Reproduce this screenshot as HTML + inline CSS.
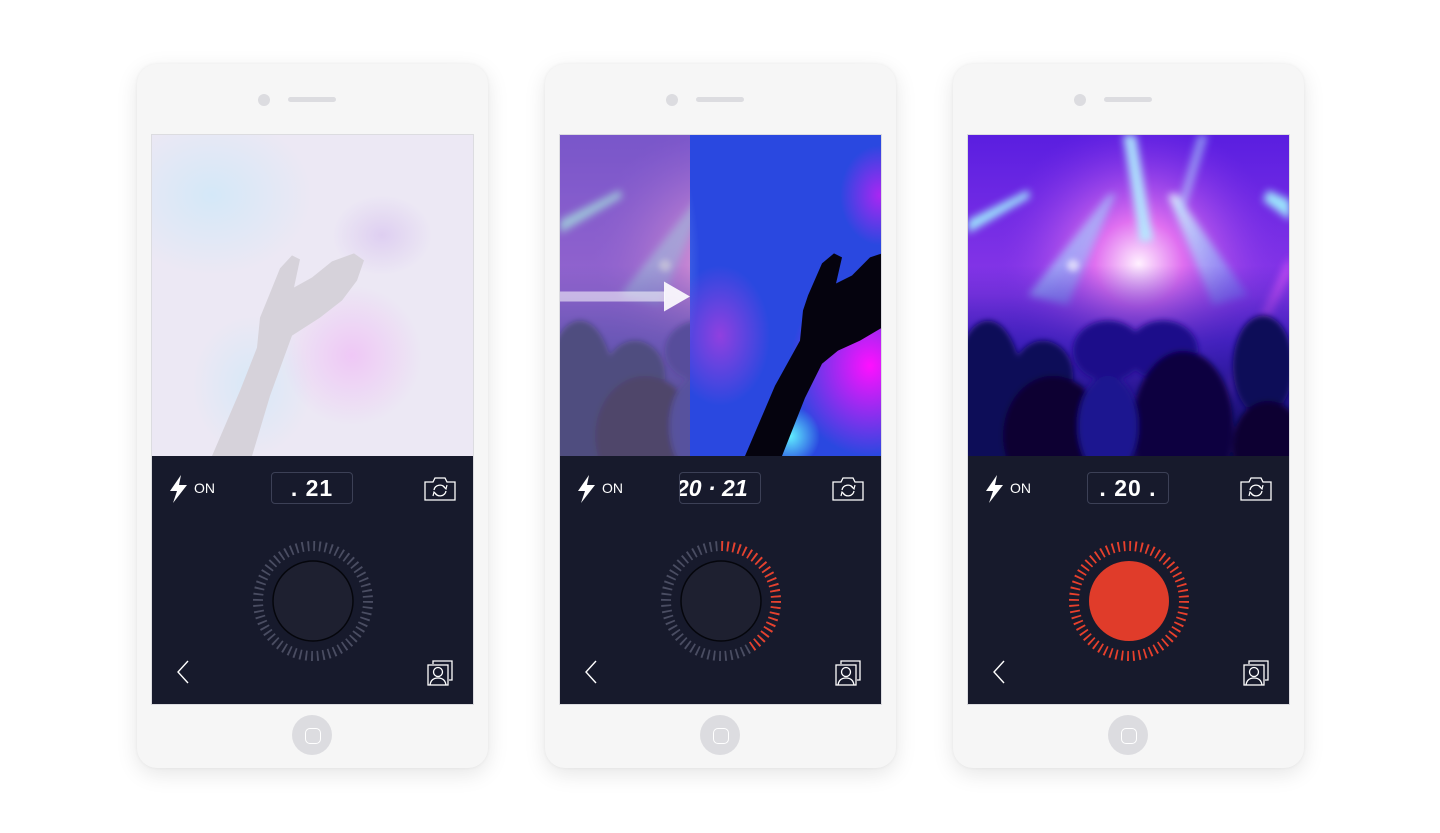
<!DOCTYPE html>
<html><head><meta charset="utf-8"><style>
*{margin:0;padding:0;box-sizing:border-box}
body{width:1440px;height:833px;background:#fff;position:relative;overflow:hidden;font-family:"Liberation Sans",sans-serif}
.ph{position:absolute;top:64px;width:351px;height:704px;background:#f6f6f6;border-radius:20px;box-shadow:0 6px 22px rgba(0,0,0,.10),0 0 3px rgba(0,0,0,.06)}
.cam{position:absolute;left:121px;top:30px;width:12px;height:12px;border-radius:50%;background:#dcdce0}
.spk{position:absolute;left:151px;top:33px;width:48px;height:5px;border-radius:3px;background:#dcdce0}
.scr{position:absolute;left:14px;top:70px;width:323px;height:571px;border:1px solid #dcdce0;background:#171a2c;overflow:hidden}
.img{position:absolute;left:0;top:0;width:321px;height:321px;overflow:hidden}
.home{position:absolute;left:155px;top:651px;width:40px;height:40px;border-radius:50%;background:#dcdce0}
.home:after{content:"";position:absolute;left:13px;top:13px;width:14px;height:14px;border:1.5px solid #fff;border-radius:5px}
.on{position:absolute;left:42px;top:345px;color:#fff;font-size:14px}
.cnt{position:absolute;left:119px;top:337px;width:82px;height:32px;border:1px solid #3c4056;border-radius:4px;color:#fff;font-size:23px;font-weight:bold;text-align:center;line-height:30px;overflow:hidden;white-space:nowrap;letter-spacing:1px}
.ic{position:absolute}
</style></head><body>
<svg width="0" height="0" style="position:absolute">
<defs>
<radialGradient id="glow" cx="0.53" cy="0.4" r="0.45"><stop offset="0" stop-color="#fff0ff"/><stop offset="0.3" stop-color="#e070f0"/><stop offset="1" stop-color="#7a30e8" stop-opacity="0"/></radialGradient>
<linearGradient id="bg1" x1="0" y1="0" x2="0" y2="1"><stop offset="0" stop-color="#5a1ee0"/><stop offset="0.5" stop-color="#8a38e8"/><stop offset="1" stop-color="#3020b0"/></linearGradient>
<linearGradient id="beam" x1="0" y1="0" x2="1" y2="1"><stop offset="0" stop-color="#e8ffff"/><stop offset="1" stop-color="#50d0ff" stop-opacity="0.2"/></linearGradient>
<radialGradient id="b1"><stop offset="0" stop-color="#a8e8ff"/><stop offset="1" stop-color="#a8e8ff" stop-opacity="0"/></radialGradient>
<radialGradient id="b2"><stop offset="0" stop-color="#ff10ff"/><stop offset="1" stop-color="#ff10ff" stop-opacity="0"/></radialGradient>
<radialGradient id="b3"><stop offset="0" stop-color="#60f0ff"/><stop offset="1" stop-color="#60f0ff" stop-opacity="0"/></radialGradient>
<radialGradient id="b4"><stop offset="0" stop-color="#9040e0"/><stop offset="1" stop-color="#9040e0" stop-opacity="0"/></radialGradient>
<linearGradient id="crowdfade" x1="0" y1="0" x2="0" y2="1"><stop offset="0" stop-color="#2a18b0" stop-opacity="0"/><stop offset="0.4" stop-color="#2a18b0" stop-opacity="0.7"/><stop offset="1" stop-color="#100a50"/></linearGradient>
<filter id="bl" x="-50%" y="-50%" width="200%" height="200%"><feGaussianBlur stdDeviation="4"/></filter>
<filter id="bl3" x="-50%" y="-50%" width="200%" height="200%"><feGaussianBlur stdDeviation="3"/></filter>
<symbol id="concert" viewBox="0 0 322 320">
<rect width="322" height="320" fill="url(#bg1)"/>
<rect width="322" height="320" fill="url(#glow)"/>
<g filter="url(#bl)" opacity="0.9">
<polygon points="0,85 60,55 62,62 0,98" fill="#a0f8ff"/>
<polygon points="140,60 148,58 100,170 60,160" fill="url(#beam)"/>
<polygon points="155,0 168,0 185,105 172,107" fill="#b0f0ff"/>
<polygon points="200,60 208,58 280,160 245,170" fill="url(#beam)"/>
<polygon points="300,55 322,65 322,85 295,65" fill="#a0f8ff"/>
<polygon points="230,0 240,0 215,80 208,78" fill="#b0e8ff" opacity=".6"/>
<polygon points="322,120 322,140 260,270 250,265" fill="#ff60ff" opacity=".6"/>
</g>
<rect x="0" y="130" width="322" height="190" fill="url(#crowdfade)"/>
<g fill="#0e0a58" filter="url(#bl3)">
<ellipse cx="20" cy="260" rx="35" ry="75"/>
<ellipse cx="75" cy="240" rx="30" ry="35"/>
<ellipse cx="85" cy="300" rx="50" ry="60" fill="#070530"/>
<ellipse cx="140" cy="215" rx="35" ry="30" fill="#1a108a"/>
<ellipse cx="195" cy="215" rx="35" ry="30" fill="#1a108a"/>
<ellipse cx="215" cy="290" rx="50" ry="75" fill="#0a0640"/>
<ellipse cx="295" cy="230" rx="30" ry="50"/>
<ellipse cx="300" cy="310" rx="35" ry="45" fill="#070530"/>
<ellipse cx="140" cy="290" rx="30" ry="50" fill="#1a1290"/>
</g>
<circle cx="105" cy="130" r="6" fill="#fff" opacity=".6" filter="url(#bl3)"/>
</symbol>
<symbol id="hand" viewBox="0 0 322 320">
<rect width="322" height="320" fill="#2a48e0"/>
<ellipse cx="50" cy="130" rx="90" ry="180" fill="url(#b1)"/>
<ellipse cx="60" cy="30" rx="70" ry="70" fill="url(#b1)"/>
<ellipse cx="310" cy="230" rx="80" ry="90" fill="url(#b2)"/>
<ellipse cx="320" cy="60" rx="40" ry="50" fill="url(#b2)" opacity=".6"/>
<ellipse cx="160" cy="200" rx="50" ry="70" fill="url(#b4)"/>
<ellipse cx="70" cy="260" rx="40" ry="50" fill="url(#b3)"/>
<ellipse cx="230" cy="300" rx="30" ry="30" fill="url(#b3)"/>
<path d="M185 320 L215 250 L240 205 L243 175 L248 160 L262 128 L274 118 L282 122 L276 148 L292 140 L310 122 L322 118 L322 192 L300 205 L278 215 L262 228 L245 262 L222 320 Z" fill="#05030e"/>
</symbol>
<symbol id="paleHand" viewBox="0 0 322 320">
<rect width="322" height="320" fill="#ece8f4"/>
<ellipse cx="60" cy="60" rx="100" ry="80" fill="url(#b1)" opacity=".35"/>
<ellipse cx="100" cy="250" rx="60" ry="70" fill="url(#b1)" opacity=".3"/>
<ellipse cx="200" cy="220" rx="70" ry="70" fill="url(#b2)" opacity=".15"/>
<ellipse cx="230" cy="100" rx="50" ry="40" fill="url(#b4)" opacity=".15"/>
<path d="M60 320 L88 255 L105 212 L108 182 L115 165 L128 133 L140 120 L148 124 L142 152 L160 142 L180 126 L202 118 L212 125 L205 145 L190 165 L168 182 L140 200 L118 260 L100 320 Z" fill="#d6d2da"/>
</symbol>
</defs>
</svg>

<!-- phone 1 -->
<div class="ph" style="left:137px">
<div class="cam"></div><div class="spk"></div>
<div class="scr">
<div class="img"><svg width="322" height="321" viewBox="0 0 322 320" preserveAspectRatio="none"><use href="#paleHand" width="322" height="320"/></svg></div>
<svg class="ic" style="left:16px;top:340px" width="20" height="28" viewBox="0 0 20 28"><path d="M13 0 L2 16 H9 L5 28 L19 10 H11 Z" fill="#fff"/></svg>
<div class="on">ON</div>
<div class="cnt">. 21</div>
<svg class="ic" style="left:272px;top:342px" width="32" height="24" viewBox="0 0 32 24"><path d="M1 5 H9 L11 1 H21 L23 5 H31 V23 H1 Z" fill="none" stroke="#fff" stroke-width="1.3"/><path d="M10 13 A6 6 0 0 1 21 11 M22 14 A6 6 0 0 1 11 16" fill="none" stroke="#fff" stroke-width="1.3"/><path d="M19 9 L22 12 L23 8 M13 18 L10 15 L9 19" fill="none" stroke="#fff" stroke-width="1.2"/></svg>
<svg class="ic" style="left:100px;top:405px" width="122" height="122" viewBox="0 0 122 122"><circle cx="61" cy="61" r="55" fill="none" stroke="#4a4d62" stroke-width="10" stroke-dasharray="1.8 3.96"/><circle cx="61" cy="61" r="40" fill="#1e2030" stroke="#05060c" stroke-width="1.5"/></svg>
<svg class="ic" style="left:24px;top:525px" width="14" height="24" viewBox="0 0 14 24"><path d="M12 1 L2 12 L12 23" fill="none" stroke="#fff" stroke-width="1.4"/></svg>
<svg class="ic" style="left:275px;top:525px" width="26" height="26" viewBox="0 0 26 26"><path d="M6 4 V1 H25 V20 H22" fill="none" stroke="#fff" stroke-width="1.3"/><rect x="1" y="5" width="20" height="20" fill="none" stroke="#fff" stroke-width="1.3"/><circle cx="11" cy="12" r="4.5" fill="none" stroke="#fff" stroke-width="1.3"/><path d="M3 25 Q4 18 11 18 Q18 18 19 25" fill="none" stroke="#fff" stroke-width="1.3"/></svg>
</div>
<div class="home"></div>
</div>

<!-- phone 2 -->
<div class="ph" style="left:545px">
<div class="cam"></div><div class="spk"></div>
<div class="scr">
<div class="img"><svg width="322" height="321" viewBox="0 0 322 320" preserveAspectRatio="none"><use href="#hand" width="322" height="320"/><svg x="0" y="0" width="130" height="320" viewBox="0 0 130 320"><use href="#concert" x="0" y="0" width="322" height="320"/></svg><rect x="0" width="130" height="320" fill="#a09cb0" opacity="0.45"/><rect x="0" y="156" width="105" height="10" fill="#fff" opacity="0.55"/><polygon points="104,146 130,161 104,176" fill="#fff" opacity="0.9"/></svg></div>
<svg class="ic" style="left:16px;top:340px" width="20" height="28" viewBox="0 0 20 28"><path d="M13 0 L2 16 H9 L5 28 L19 10 H11 Z" fill="#fff"/></svg>
<div class="on">ON</div>
<div class="cnt" style="text-align:left;text-indent:-4px;font-style:italic;letter-spacing:0">20 · 21</div>
<svg class="ic" style="left:272px;top:342px" width="32" height="24" viewBox="0 0 32 24"><path d="M1 5 H9 L11 1 H21 L23 5 H31 V23 H1 Z" fill="none" stroke="#fff" stroke-width="1.3"/><path d="M10 13 A6 6 0 0 1 21 11 M22 14 A6 6 0 0 1 11 16" fill="none" stroke="#fff" stroke-width="1.3"/><path d="M19 9 L22 12 L23 8 M13 18 L10 15 L9 19" fill="none" stroke="#fff" stroke-width="1.2"/></svg>
<svg class="ic" style="left:100px;top:405px" width="122" height="122" viewBox="0 0 122 122"><defs><clipPath id="wedge"><path d="M61 61 L61 0 L122 0 L122 100 L100 122 Z"/></clipPath></defs><circle cx="61" cy="61" r="55" fill="none" stroke="#4a4d62" stroke-width="10" stroke-dasharray="1.8 3.96"/><circle cx="61" cy="61" r="55" fill="none" stroke="#e8402c" stroke-width="10" stroke-dasharray="1.8 3.96" clip-path="url(#wedge)"/><circle cx="61" cy="61" r="40" fill="#1e2030" stroke="#05060c" stroke-width="1.5"/></svg>
<svg class="ic" style="left:24px;top:525px" width="14" height="24" viewBox="0 0 14 24"><path d="M12 1 L2 12 L12 23" fill="none" stroke="#fff" stroke-width="1.4"/></svg>
<svg class="ic" style="left:275px;top:525px" width="26" height="26" viewBox="0 0 26 26"><path d="M6 4 V1 H25 V20 H22" fill="none" stroke="#fff" stroke-width="1.3"/><rect x="1" y="5" width="20" height="20" fill="none" stroke="#fff" stroke-width="1.3"/><circle cx="11" cy="12" r="4.5" fill="none" stroke="#fff" stroke-width="1.3"/><path d="M3 25 Q4 18 11 18 Q18 18 19 25" fill="none" stroke="#fff" stroke-width="1.3"/></svg>
</div>
<div class="home"></div>
</div>

<!-- phone 3 -->
<div class="ph" style="left:953px">
<div class="cam"></div><div class="spk"></div>
<div class="scr">
<div class="img"><svg width="322" height="321" viewBox="0 0 322 320" preserveAspectRatio="none"><use href="#concert" width="322" height="320"/></svg></div>
<svg class="ic" style="left:16px;top:340px" width="20" height="28" viewBox="0 0 20 28"><path d="M13 0 L2 16 H9 L5 28 L19 10 H11 Z" fill="#fff"/></svg>
<div class="on">ON</div>
<div class="cnt">. 20 .</div>
<svg class="ic" style="left:272px;top:342px" width="32" height="24" viewBox="0 0 32 24"><path d="M1 5 H9 L11 1 H21 L23 5 H31 V23 H1 Z" fill="none" stroke="#fff" stroke-width="1.3"/><path d="M10 13 A6 6 0 0 1 21 11 M22 14 A6 6 0 0 1 11 16" fill="none" stroke="#fff" stroke-width="1.3"/><path d="M19 9 L22 12 L23 8 M13 18 L10 15 L9 19" fill="none" stroke="#fff" stroke-width="1.2"/></svg>
<svg class="ic" style="left:100px;top:405px" width="122" height="122" viewBox="0 0 122 122"><circle cx="61" cy="61" r="55" fill="none" stroke="#e8402c" stroke-width="10" stroke-dasharray="1.8 3.96"/><circle cx="61" cy="61" r="40" fill="#e03c2a"/></svg>
<svg class="ic" style="left:24px;top:525px" width="14" height="24" viewBox="0 0 14 24"><path d="M12 1 L2 12 L12 23" fill="none" stroke="#fff" stroke-width="1.4"/></svg>
<svg class="ic" style="left:275px;top:525px" width="26" height="26" viewBox="0 0 26 26"><path d="M6 4 V1 H25 V20 H22" fill="none" stroke="#fff" stroke-width="1.3"/><rect x="1" y="5" width="20" height="20" fill="none" stroke="#fff" stroke-width="1.3"/><circle cx="11" cy="12" r="4.5" fill="none" stroke="#fff" stroke-width="1.3"/><path d="M3 25 Q4 18 11 18 Q18 18 19 25" fill="none" stroke="#fff" stroke-width="1.3"/></svg>
</div>
<div class="home"></div>
</div>
</body></html>
